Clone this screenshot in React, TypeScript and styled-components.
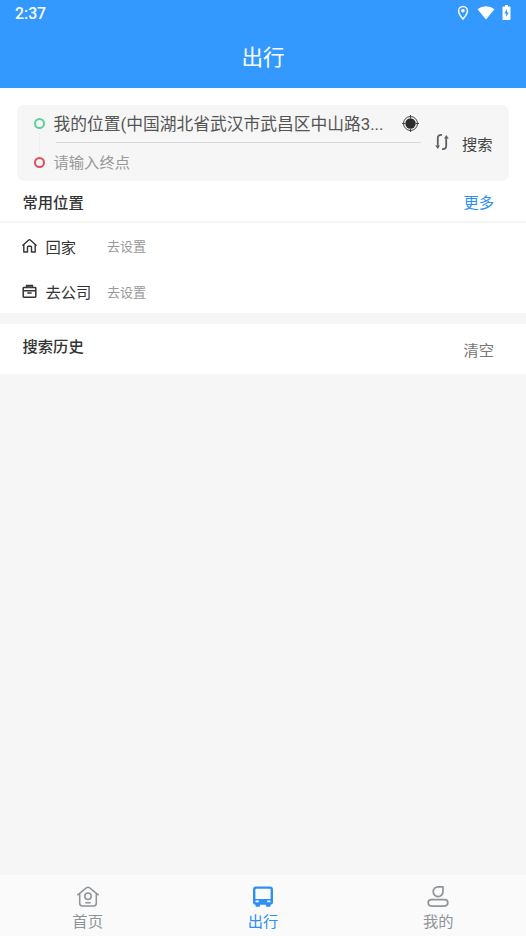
import React from "react";
import styled, { createGlobalStyle } from "styled-components";

const GlobalStyle = createGlobalStyle`
  * { box-sizing: border-box; }
  body { margin: 0; background: #f6f6f6; font-family: Roboto, "Noto Sans CJK SC", sans-serif; }
  svg { display: block; flex: none; }
`;

const Screen = styled.div`
  height: 936px;
  display: flex;
  flex-direction: column;
  background: #f6f6f6;
  overflow: hidden;
`;

const Header = styled.header`
  height: 88px;
  flex: none;
  background: #3399ff;
  color: #fff;
`;

const StatusBar = styled.div`
  height: 28px;
  padding: 0 15px;
  display: flex;
  align-items: flex-start;
  justify-content: space-between;
`;

const Clock = styled.span`
  font-size: 15.8px;
  font-weight: 500;
  line-height: 28px;
`;

const StatusIcons = styled.div`
  display: flex;
  align-items: center;
  gap: 7.5px;
  height: 26px;
`;

const Title = styled.h1`
  margin: 0;
  font-size: 21.6px;
  font-weight: 400;
  line-height: 60px;
  text-align: center;
`;

const Panel = styled.section`
  flex: none;
  background: #fff;
`;

const PlacesPanel = styled(Panel)`
  height: 225px;
  padding-top: 17px;
`;

const SearchCard = styled.div`
  height: 76px;
  margin: 0 17px;
  padding-left: 16px;
  display: flex;
  border-radius: 7px;
  background: #f6f6f6;
`;

const Markers = styled.div`
  width: 12px;
  padding-top: 13px;
  display: flex;
  flex-direction: column;
  align-items: center;
`;

const Ring = styled.i<{ $color: string }>`
  width: 11px;
  height: 11px;
  border: 2px solid ${(p) => p.$color};
  border-radius: 50%;
`;

const Dots = styled.i`
  height: 20px;
  margin: 4px 0 3.5px;
  border-left: 1px dotted #e8e4e4;
`;

const Fields = styled.div`
  width: 367px;
  margin-left: 9px;
`;

const StartField = styled.div`
  height: 37px;
  padding-right: 1px;
  display: flex;
  align-items: flex-start;
  justify-content: space-between;
  color: #555;
  font-size: 16.75px;
  white-space: nowrap;
`;

const StartText = styled.span`
  line-height: 38px;
  margin-left: -0.5px;
`;

const LocateButton = styled.span`
  padding-top: 9.5px;
`;

const Divider = styled.div`
  height: 1px;
  margin-left: 2px;
  background: #dadada;
`;

const EndField = styled.div`
  height: 38px;
  margin-left: -0.5px;
  color: #999;
  font-size: 15.3px;
  line-height: 41px;
`;

const SearchActions = styled.div`
  margin-left: 14px;
  padding-bottom: 3px;
  display: flex;
  align-items: center;
  gap: 13px;
  color: #444;
  font-size: 15.3px;
`;

const SearchLabel = styled.span`
  padding-top: 2px;
`;

const SectionHead = styled.div<{ $height: number }>`
  height: ${(p) => p.$height}px;
  padding: 0 32px 0 23px;
  display: flex;
  justify-content: space-between;
`;

const Heading = styled.h2<{ $line: number }>`
  margin: 0 0 0 -0.5px;
  color: #333;
  font-size: 15.3px;
  font-weight: 500;
  line-height: ${(p) => p.$line}px;
`;

const HeadAction = styled.span<{ $color: string; $line: number }>`
  color: ${(p) => p.$color};
  font-size: 15.3px;
  line-height: ${(p) => p.$line}px;
`;

const PlaceList = styled.div`
  border-top: 2px solid #f4f4f4;
`;

const PlaceRow = styled.div`
  height: 45.5px;
  padding-left: 22px;
  display: flex;
  align-items: center;
`;

const PlaceName = styled.span`
  width: 62px;
  margin-left: 8.5px;
  color: #333;
  font-size: 15.3px;
`;

const PlaceHint = styled.span`
  margin-left: -0.5px;
  color: #999;
  font-size: 13px;
`;

const HistoryPanel = styled(Panel)`
  height: 50px;
  margin-top: 11px;
`;

const TabBar = styled.nav`
  height: 61px;
  flex: none;
  margin-top: auto;
  display: grid;
  grid-template-columns: repeat(3, 1fr);
  background: #fafafa;
`;

const Tab = styled.div<{ $active?: boolean }>`
  padding-top: 10px;
  display: flex;
  flex-direction: column;
  align-items: center;
  color: ${(p) => (p.$active ? "#2e8ff5" : "#8f9499")};
`;

const TabLabel = styled.span`
  margin-top: 1px;
  font-size: 15.3px;
  line-height: 24px;
`;

const PinIcon = () => (
  <svg width="12" height="16" viewBox="0 0 12 16" fill="none" stroke="#fff">
    <path d="M6 14C3.600 11.200 1.600 8.500 1.600 5.900a4.400 4.400 0 0 1 8.800 0c0 2.600-2 5.300-4.400 8.100Z" strokeWidth="1.500" />
    <circle cx="6" cy="5.800" r="1.800" fill="#fff" stroke="none" />
  </svg>
);

const WifiIcon = () => (
  <svg width="18" height="16" viewBox="0 0 18 16" fill="#fff">
    <path d="M.5 4.200a13.500 13.500 0 0 1 17 0L9 14.600Z" />
  </svg>
);

const BatteryIcon = () => (
  <svg width="9" height="16" viewBox="0 0 9 16">
    <path d="M3 0h3v1.500h1.800c.5 0 .7.300.7.700v12c0 .5-.3.700-.7.700H1.200c-.5 0-.7-.3-.7-.7v-12c0-.4.300-.7.700-.7H3Z" fill="#fff" />
    <path d="M5 4 2.400 8.500h1.800V12l2.600-4.500H5Z" fill="#3399ff" />
  </svg>
);

const LocateIcon = () => (
  <svg width="18" height="18" viewBox="0 0 18 18" fill="none" stroke="#444">
    <circle cx="8.500" cy="8.500" r="7" strokeWidth="1" />
    <path d="M8.500 0v3M8.500 14v3M0 8.500h3M14 8.500h3" strokeWidth="1" />
    <circle cx="8.500" cy="8.500" r="5.200" fill="#2c2c2c" stroke="none" />
  </svg>
);

const SwapIcon = () => (
  <svg width="14" height="18" viewBox="0 0 14 18" fill="none" stroke="#606060" strokeWidth="1.800">
    <path d="M7 1.800H6.200C4 1.800 2.800 3 2.800 5.200V14M7 16.200h.8c2.200 0 3.400-1.200 3.400-3.400V4" />
    <path d="M.2 12.400h4.700l-2 3.500ZM9.100 5.600h4.700l-2.600-3.500Z" fill="#606060" stroke="none" />
  </svg>
);

const HomeIcon = () => (
  <svg width="15" height="15" viewBox="0 0 15 15" fill="none" stroke="#333" strokeWidth="1.400" strokeLinejoin="round" strokeLinecap="round">
    <path d="M.9 7.200 6.700 2c.5-.4 1.100-.4 1.600 0l5.800 5.200M1.800 6.500V14H5.500V9c0-.5.300-.8.800-.8h2.400c.5 0 .8.300.8.800v5h3.700V6.500" />
  </svg>
);

const BriefcaseIcon = () => (
  <svg width="15" height="15" viewBox="0 0 15 15" fill="none" stroke="#333" strokeWidth="1.500">
    <rect x="1.200" y="3.600" width="12.600" height="9.600" rx=".7" />
    <path d="M4.600 3.300V1.600h5.800v1.700M1 6.800h13M5.300 9h4.400" />
    <path d="M4.700 2h5.600v1.500H4.700Z" fill="#555" stroke="none" />
  </svg>
);

const TabHomeIcon = () => (
  <svg width="24" height="24" viewBox="0 0 24 24" fill="none" stroke="currentColor" strokeWidth="1.500" strokeLinejoin="round" strokeLinecap="round">
    <path d="M1.700 9.800 10.700 2.700c.8-.6 1.800-.6 2.600 0l9 7.100M3.700 8.600v9.600c0 1.900.9 2.800 2.800 2.800h11c1.900 0 2.800-.9 2.800-2.800V8.600" />
    <circle cx="12" cy="11.300" r="3.200" />
    <path d="M9.800 17.800h4.400" />
  </svg>
);

const TabBusIcon = () => (
  <svg width="24" height="24" viewBox="0 0 24 24" fill="currentColor">
    <path fillRule="evenodd" d="M5 1.500h14c2 0 3 1 3 3V17c0 1.700-.8 2.700-2.500 2.700V21c0 .6-.3.800-1 .8H16c-.7 0-1-.2-1-.8v-1.300H9V21c0 .6-.3.800-1 .8H5.500c-.7 0-1-.2-1-.8v-1.300C2.800 19.700 2 18.700 2 17V4.500c0-2 1-3 3-3ZM5.200 3.800c-.5 0-.8.300-.8.800v9.300h15.200V4.600c0-.5-.3-.8-.8-.8ZM4.500 15.500v1.800h3.300v-1.800Zm11.700 0v1.800h3.300v-1.800Z" />
  </svg>
);

const TabUserIcon = () => (
  <svg width="24" height="24" viewBox="0 0 24 24" fill="none" stroke="currentColor" strokeWidth="1.700" strokeLinejoin="round">
    <path d="M12.300 1.800H17v4.800a4.900 4.900 0 1 1-4.700-4.800Z" />
    <rect x="2.200" y="14.600" width="19.600" height="6.500" rx="3.250" />
  </svg>
);

export default function App() {
  return (
    <Screen>
      <GlobalStyle />
      <Header>
        <StatusBar>
          <Clock>2:37</Clock>
          <StatusIcons>
            <PinIcon />
            <WifiIcon />
            <BatteryIcon />
          </StatusIcons>
        </StatusBar>
        <Title>出行</Title>
      </Header>

      <PlacesPanel>
        <SearchCard>
          <Markers>
            <Ring $color="#5fd09a" />
            <Dots />
            <Ring $color="#e04d5c" />
          </Markers>
          <Fields>
            <StartField>
              <StartText>我的位置(中国湖北省武汉市武昌区中山路3...</StartText>
              <LocateButton>
                <LocateIcon />
              </LocateButton>
            </StartField>
            <Divider />
            <EndField>请输入终点</EndField>
          </Fields>
          <SearchActions>
            <SwapIcon />
            <SearchLabel>搜索</SearchLabel>
          </SearchActions>
        </SearchCard>
        <SectionHead $height={40}>
          <Heading $line={44}>常用位置</Heading>
          <HeadAction $color="#2e8ff5" $line={44}>更多</HeadAction>
        </SectionHead>
        <PlaceList>
          <PlaceRow>
            <HomeIcon />
            <PlaceName>回家</PlaceName>
            <PlaceHint>去设置</PlaceHint>
          </PlaceRow>
          <PlaceRow>
            <BriefcaseIcon />
            <PlaceName>去公司</PlaceName>
            <PlaceHint>去设置</PlaceHint>
          </PlaceRow>
        </PlaceList>
      </PlacesPanel>

      <HistoryPanel>
        <SectionHead $height={50}>
          <Heading $line={46}>搜索历史</Heading>
          <HeadAction $color="#777" $line={54}>清空</HeadAction>
        </SectionHead>
      </HistoryPanel>

      <TabBar>
        <Tab>
          <TabHomeIcon />
          <TabLabel>首页</TabLabel>
        </Tab>
        <Tab $active>
          <TabBusIcon />
          <TabLabel>出行</TabLabel>
        </Tab>
        <Tab>
          <TabUserIcon />
          <TabLabel>我的</TabLabel>
        </Tab>
      </TabBar>
    </Screen>
  );
}
